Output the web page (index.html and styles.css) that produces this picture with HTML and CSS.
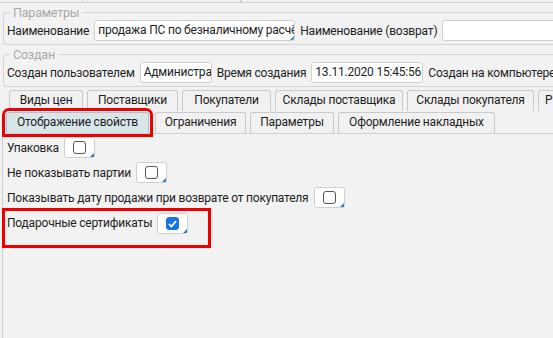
FILE: index.html
```html
<!DOCTYPE html>
<html lang="ru">
<head>
    <meta charset="UTF-8">
    <title>Настройки</title>
    <link rel="stylesheet" href="styles.css">
</head>
<body>
    <div class="topstrip">
        <span class="cell w1"></span><span class="cell w2"></span><span class="cell"></span>
    </div>

    <fieldset class="group">
        <legend>Параметры</legend>
        <div class="row">
            <label>Наименование</label>
            <span class="field corner w-name">продажа ПС по безналичному расчёту</span>
            <label>Наименование (возврат)</label>
            <span class="field w-ret"></span>
        </div>
    </fieldset>

    <fieldset class="group">
        <legend>Создан</legend>
        <div class="row">
            <label>Создан пользователем</label>
            <span class="field w-user">Администратор</span>
            <label>Время создания</label>
            <span class="field w-time">13.11.2020 15:45:56</span>
            <label>Создан на компьютере</label>
        </div>
    </fieldset>

    <div class="tabs tabs-top">
        <span class="tab t1">Виды цен</span>
        <span class="tab t2">Поставщики</span>
        <span class="tab t3">Покупатели</span>
        <span class="tab t4">Склады поставщика</span>
        <span class="tab t5">Склады покупателя</span>
        <span class="tab t6">Р</span>
    </div>
    <div class="tabs tabs-bottom">
        <span class="tab active marked">Отображение свойств</span>
        <span class="tab t7">Ограничения</span>
        <span class="tab t8">Параметры</span>
        <span class="tab t9">Оформление накладных</span>
    </div>

    <div class="panel">
        <div class="opt">
            <label>Упаковка</label>
            <span class="check"><span class="box"></span></span>
        </div>
        <div class="opt">
            <label>Не показывать партии</label>
            <span class="check"><span class="box"></span></span>
        </div>
        <div class="opt">
            <label>Показывать дату продажи при возврате от покупателя</label>
            <span class="check"><span class="box"></span></span>
        </div>
        <div class="opt marked-row">
            <label>Подарочные сертификаты</label>
            <span class="check"><span class="box on">
                <svg width="9" height="8" viewBox="0 0 9 8"><path d="M1 4.2 L3.4 6.5 L8 1.2" fill="none" stroke="#fff" stroke-width="1.8"/></svg>
            </span></span>
        </div>
    </div>
</body>
</html>
```

FILE: styles.css
```css
body {
    margin: 0;
    background: #f2f2f2;
    font-family: Roboto, "Liberation Sans", sans-serif;
    font-size: 12px;
    letter-spacing: -0.2px;
    color: #1e1e1e;
    width: 553px;
    height: 338px;
    overflow: hidden;
}

.topstrip {
    display: flex;
    height: 2px;
    border-bottom: 1px solid #d2d2d2;
}
.cell {
    border-right: 1px solid #d2d2d2;
}
.cell.w1 { width: 82px; }
.cell.w2 { width: 157px; }

.group {
    margin: 2px 0 0 3px;
    padding: 0 0 3px 3px;
    border: 1px solid #d4d4d4;
    border-right: none;
    border-radius: 3px 0 0 3px;
    min-width: 0;
}
legend {
    color: #a8a8a8;
    padding: 0 3px;
    margin-left: 3px;
    line-height: 15px;
    font-size: 12.5px;
}

.row {
    display: flex;
    align-items: center;
    gap: 5px;
    height: 21px;
    white-space: nowrap;
}
.row label {
    flex: none;
}

.field {
    position: relative;
    flex: none;
    box-sizing: border-box;
    height: 21px;
    line-height: 19px;
    padding: 0 3px;
    background: #fff;
    border: 1px solid #d0d0d0;
    border-radius: 3px;
    overflow: hidden;
}
.corner::after {
    content: "";
    position: absolute;
    right: 0;
    bottom: 0;
    border-style: solid;
    border-width: 0 0 4px 4px;
    border-color: transparent transparent #2a80c8 transparent;
}
.w-name { width: 201px; }
.w-ret { width: 120px; }
.w-user { width: 72px; }
.w-time { width: 112px; }

.tabs {
    display: flex;
    gap: 4px;
    white-space: nowrap;
}
.tabs-top {
    margin: 3px 0 0 9px;
}
.tabs-bottom {
    margin: 1px 0 0 6px;
    border-bottom: 1px solid #cfcfcf;
    width: 547px;
}
.tab {
    flex: none;
    box-sizing: border-box;
    height: 21px;
    line-height: 19px;
    text-align: center;
    border: 1px solid #cacaca;
    border-bottom: none;
    border-radius: 3px 3px 0 0;
    background: #f1f1f1;
}
.t1 { width: 74px; }
.t2 { width: 91px; }
.t3 { width: 89px; }
.t4 { width: 128px; }
.t5 { width: 127px; }
.t6 { width: 30px; text-align: left; padding-left: 6px; }
.t7 { width: 91px; }
.t8 { width: 84px; }
.t9 { width: 157px; }

.tab.active {
    width: 143px;
    background: #d9e6e9;
    border-color: #a8c4cc;
}
.marked {
    position: relative;
    outline: 3px solid #f00000;
    outline-offset: 1px;
    margin-right: 2px;
}

.panel {
    margin-left: 2px;
    border-left: 1px solid #cfcfcf;
    padding: 3px 0 0 4px;
    height: 205px;
}
.opt {
    display: flex;
    align-items: center;
    gap: 5px;
    height: 21px;
    margin-bottom: 4px;
    white-space: nowrap;
}
.opt + .opt {
    margin-top: 1px;
}
.opt.marked-row {
    box-sizing: border-box;
    width: 209px;
    height: 40px;
    margin-top: -4px;
    margin-left: -5px;
    padding: 2px 0 0 2px;
    align-items: flex-start;
    border: 3px solid #f00000;
}
.marked-row label {
    line-height: 21px;
}

.check {
    position: relative;
    box-sizing: border-box;
    width: 31px;
    height: 21px;
    background: #fff;
    border: 1px solid #cfcfcf;
    border-radius: 3px;
    display: flex;
    align-items: center;
    justify-content: center;
}
.check::after {
    content: "";
    position: absolute;
    right: 0;
    bottom: 0;
    border-style: solid;
    border-width: 0 0 4px 4px;
    border-color: transparent transparent #2a80c8 transparent;
}
.box {
    box-sizing: border-box;
    width: 13px;
    height: 13px;
    border: 1px solid #555;
    border-radius: 3px;
    display: flex;
    align-items: center;
    justify-content: center;
}
.box.on {
    background: #1673e6;
    border-color: #1673e6;
}
```
